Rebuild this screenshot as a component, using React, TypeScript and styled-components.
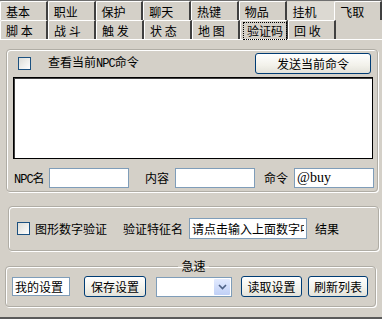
import styled, { createGlobalStyle } from 'styled-components';

const GlobalStyle = createGlobalStyle`
  html, body {
    margin: 0;
    padding: 0;
    background: #d4d0c8;
  }
  * {
    box-sizing: border-box;
  }
`;

const rowOne = ['基本', '职业', '保护', '聊天', '热键', '物品', '挂机', '飞取'];
const rowTwo = ['脚 本', '战 斗', '触 发', '状 态', '地 图', '验证码', '回 收'];

export default function App() {
  return (
    <Window>
      <GlobalStyle />
      <TabStrip>
        <TabRow>
          {rowOne.map((t) => (
            <Tab key={t} $flat={t === '挂机'}>{t}</Tab>
          ))}
        </TabRow>
        <TabRow>
          {rowTwo.map((t) => (
            <Tab key={t} $active={t === '验证码'}>
              {t === '验证码' ? <Focus>{t}</Focus> : t}
            </Tab>
          ))}
        </TabRow>
      </TabStrip>

      <Panel>
        <NpcGroup>
          <TopRow>
            <CheckLine>
              <CheckBox />
              <LabelText>查看当前<Latin>NPC</Latin>命令</LabelText>
            </CheckLine>
            <XpButton $width={116}>发送当前命令</XpButton>
          </TopRow>
          <LogBox />
          <FieldRow>
            <FieldLabel $width={35}><Latin>NPC</Latin>名</FieldLabel>
            <TextInput $width={80} />
            <FieldLabel $left={16} $width={30}>内容</FieldLabel>
            <TextInput $width={80} />
            <FieldLabel $left={9} $width={30}>命令</FieldLabel>
            <TextInput $width={80} defaultValue="@buy" $serif />
          </FieldRow>
        </NpcGroup>

        <VerifyGroup>
          <CheckBox />
          <LabelText $left={5}>图形数字验证</LabelText>
          <LabelText $left={16}>验证特征名</LabelText>
          <TextInput $width={118} $height={21} $left={6} defaultValue="请点击输入上面数字中" />
          <LabelText $left={8}>结果</LabelText>
        </VerifyGroup>

        <SpeedGroup>
          <Legend>急速</Legend>
          <BottomRow>
            <TextInput $width={58} $height={19} defaultValue="我的设置" />
            <XpButton $width={62} $left={14}>保存设置</XpButton>
            <Combo>
              <ComboArrow>
                <svg width="9" height="6" viewBox="0 0 9 6">
                  <path d="M1 1 L4.5 4.5 L8 1" fill="none" stroke="#4d6185" strokeWidth="1.6" />
                </svg>
              </ComboArrow>
            </Combo>
            <XpButton $width={61} $left={9}>读取设置</XpButton>
            <XpButton $width={60} $left={6}>刷新列表</XpButton>
          </BottomRow>
        </SpeedGroup>
      </Panel>
    </Window>
  );
}

const Window = styled.div`
  width: 382px;
  height: 319px;
  background: #d4d0c8;
  font-family: "Noto Sans CJK SC", "Liberation Sans", sans-serif;
  font-size: 12px;
  color: #000;
  border-top: 1px solid #6f6f6f;
  border-bottom: 2px solid #5a5a5a;
  overflow: hidden;
  display: flex;
  flex-direction: column;
`;

const TabStrip = styled.div`
  display: flex;
  flex-direction: column;
  border-bottom: 1px solid #fff;
`;

const TabRow = styled.div`
  display: flex;
  height: 19px;
`;

const Tab = styled.div<{ $active?: boolean; $flat?: boolean }>`
  width: 48px;
  height: 19px;
  padding-left: ${(p) => (p.$active ? '2px' : '5px')};
  padding-top: 1px;
  display: flex;
  align-items: center;
  line-height: 14px;
  white-space: pre;
  border-top: 1px solid ${(p) => (p.$flat ? 'transparent' : '#fff')};
  border-left: 1px solid ${(p) => (p.$flat ? 'transparent' : '#fff')};
  border-right: 2px solid ${(p) => (p.$flat ? 'transparent' : '#404040')};
  border-top-left-radius: 2px;
  background: ${(p) => (p.$flat ? '#dcd9d2' : '#d4d0c8')};
`;

const Focus = styled.span`
  display: block;
  padding: 1px 3px;
  border: 1px dotted #000;
  line-height: 14px;
`;

const Latin = styled.span`
  font-family: "Liberation Mono", monospace;
  font-size: 12px;
  letter-spacing: -1px;
`;

const Panel = styled.div`
  flex: 1;
  display: flex;
  flex-direction: column;
`;

const Group = styled.div`
  border: 1px solid #b0ada5;
  border-radius: 4px;
  box-shadow: inset 1px 1px 0 #fff, 1px 1px 0 #fff;
`;

const NpcGroup = styled(Group)`
  margin: 9px 0 0 6px;
  width: 372px;
  height: 143px;
  padding: 3px 4px 0 6px;
  display: flex;
  flex-direction: column;
`;

const TopRow = styled.div`
  display: flex;
  align-items: center;
  justify-content: space-between;
  height: 20px;
  padding-right: 2px;
`;

const CheckLine = styled.div`
  display: flex;
  align-items: center;
  padding-left: 5px;
  gap: 17px;
`;

const CheckBox = styled.div`
  width: 13px;
  height: 13px;
  border: 1px solid #1c5180;
  background: linear-gradient(135deg, #dcdcd7, #fff);
  flex-shrink: 0;
`;

const LabelText = styled.span<{ $left?: number }>`
  margin-left: ${(p) => p.$left ?? 0}px;
  white-space: nowrap;
  line-height: 14px;
`;

const XpButton = styled.div<{ $width: number; $left?: number }>`
  width: ${(p) => p.$width}px;
  height: 21px;
  margin-left: ${(p) => p.$left ?? 0}px;
  border: 1px solid #003c74;
  border-radius: 3px;
  background: linear-gradient(#fff, #f2f1ea 60%, #e3e2da);
  display: flex;
  align-items: center;
  justify-content: center;
  flex-shrink: 0;
`;

const LogBox = styled.div`
  margin-top: 4px;
  width: 360px;
  height: 82px;
  background: #fff;
  border: 1px solid #000;
  box-shadow: inset 1px 1px 0 #404040;
`;

const FieldRow = styled.div`
  display: flex;
  align-items: center;
  margin-top: 8px;
  height: 21px;
  padding-left: 1px;
`;

const FieldLabel = styled.span<{ $left?: number; $width: number }>`
  width: ${(p) => p.$width}px;
  margin-left: ${(p) => p.$left ?? 0}px;
  white-space: nowrap;
  flex-shrink: 0;
`;

const TextInput = styled.input<{ $width: number; $height?: number; $left?: number; $serif?: boolean }>`
  width: ${(p) => p.$width}px;
  height: ${(p) => p.$height ?? 20}px;
  margin: 0 0 0 ${(p) => p.$left ?? 0}px;
  padding: 0 2px;
  border: 1px solid #7f9db9;
  background: #fff;
  font-family: ${(p) => (p.$serif ? '"Liberation Serif", serif' : '"Noto Sans CJK SC", sans-serif')};
  font-size: ${(p) => (p.$serif ? 14 : 12)}px;
  color: #000;
  outline: none;
  flex-shrink: 0;
`;

const VerifyGroup = styled(Group)`
  margin: 14px 0 0 8px;
  width: 371px;
  height: 45px;
  padding: 0 0 0 8px;
  display: flex;
  align-items: center;
`;

const SpeedGroup = styled.fieldset`
  margin: 8px 0 0 5px;
  width: 371px;
  padding: 3px 0 9px 6px;
  border: 1px solid #b0ada5;
  border-radius: 4px;
  box-shadow: inset 1px 1px 0 #fff, 1px 1px 0 #fff;
`;

const Legend = styled.legend`
  margin: 0 auto;
  padding: 0 3px;
  line-height: 14px;
  font-size: 12px;
`;

const BottomRow = styled.div`
  display: flex;
  align-items: center;
  height: 21px;
`;

const Combo = styled.div`
  width: 76px;
  height: 20px;
  margin-left: 10px;
  border: 1px solid #7f9db9;
  background: #fff;
  display: flex;
  justify-content: flex-end;
  padding: 1px;
`;

const ComboArrow = styled.div`
  width: 16px;
  background: linear-gradient(#e2eafe, #c0d0f6);
  border-radius: 1px;
  display: flex;
  align-items: center;
  justify-content: center;
`;
